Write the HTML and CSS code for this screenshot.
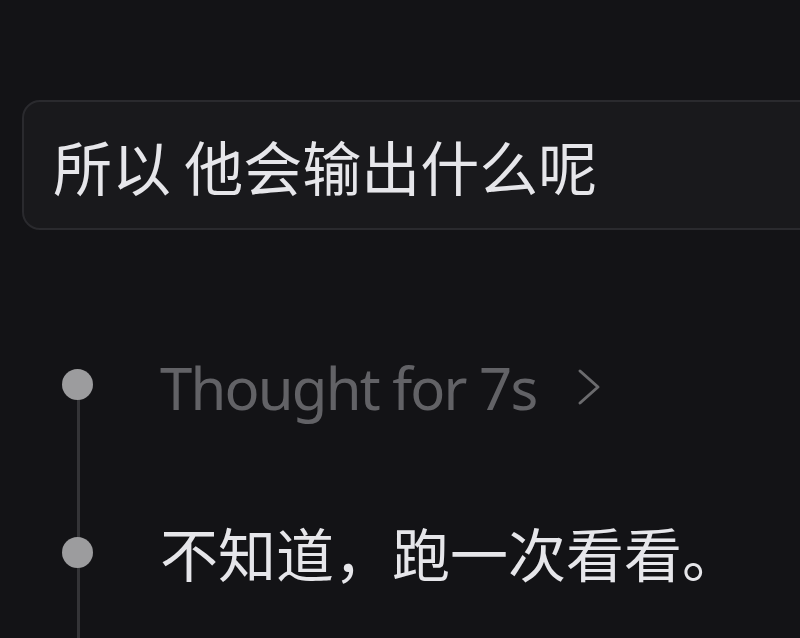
FILE: index.html
```html
<!DOCTYPE html>
<html lang="zh-CN">
<head>
<meta charset="utf-8">
<title>Chat</title>
<link rel="stylesheet" href="styles.css">
</head>
<body>
<main class="page">
  <div class="prompt">
    <p class="prompt-text">所以 他会输出什么呢</p>
  </div>
  <div class="timeline">
    <div class="step">
      <span class="dot"></span>
      <span class="thought">Thought for 7s</span>
      <svg class="chevron" width="26" height="40" viewBox="0 0 26 40" aria-hidden="true">
        <polyline points="4,4 22,20 4,36" fill="none" stroke="#6b6b6e" stroke-width="3" stroke-linecap="round" stroke-linejoin="round"/>
      </svg>
    </div>
    <div class="step">
      <span class="dot"></span>
      <span class="answer">不知道，跑一次看看。</span>
    </div>
  </div>
</main>
</body>
</html>
```
FILE: styles.css
```css
html, body {
  margin: 0;
  padding: 0;
  background: #131316;
  height: 100%;
  overflow: hidden;
}
.page {
  padding: 100px 0 0 22px;
  font-family: "Noto Sans CJK SC", "Noto Sans", sans-serif;
}
.prompt {
  height: 126px;
  margin-right: -60px;
  border: 2px solid #2a2a2e;
  border-radius: 18px;
  background: #19191c;
  display: flex;
  align-items: center;
  padding-left: 29px;
}
.prompt-text {
  margin: 0;
  color: #e6e6ea;
  font-size: 59px;
  line-height: 1;
}
.timeline {
  position: relative;
  margin-top: 114px;
  padding-left: 40px;
}
.timeline::before {
  content: "";
  position: absolute;
  left: 55px;
  top: 40px;
  bottom: -400px;
  width: 3px;
  background: #343437;
}
.step {
  position: relative;
  display: flex;
  align-items: center;
  height: 80px;
  margin-bottom: 88px;
}
.dot {
  width: 31px;
  height: 31px;
  border-radius: 50%;
  background: #9c9c9e;
  flex: none;
  margin-right: 67px;
}
.thought {
  font-family: "Noto Sans", "Open Sans", sans-serif;
  font-size: 58px;
  color: #626266;
  letter-spacing: -1.8px;
  line-height: 1;
  position: relative;
  top: 4px;
}
.chevron {
  margin-left: 40px;
  position: relative;
  top: 3px;
}
.answer {
  color: #e6e6ea;
  font-size: 58px;
  line-height: 1;
}
```
